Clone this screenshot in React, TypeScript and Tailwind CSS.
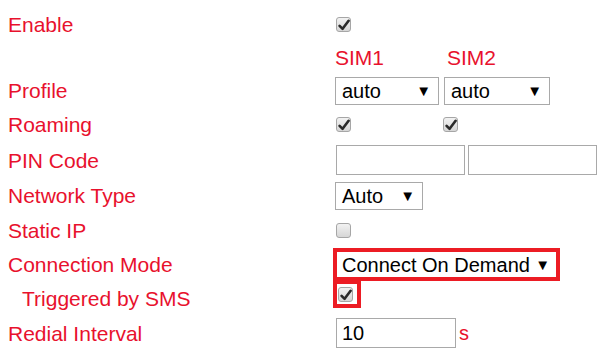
const RED = "text-[#e8112d]";

function Check({ checked = true }: { checked?: boolean }) {
  return (
    <span className="flex h-[15px] w-[15px] shrink-0 items-center justify-center rounded-[3px] border border-[#a6a6a6] bg-gradient-to-b from-[#f2f2f2] to-[#d6d6d6]">
      {checked && (
        <svg width="12" height="12" viewBox="0 0 12 12">
          <path d="M1.6 6.8 L4.6 9.8 L10.6 1.8" fill="none" stroke="#2a2a2a" strokeWidth="2.6" strokeLinecap="round" strokeLinejoin="round" />
        </svg>
      )}
    </span>
  );
}

function Arrow() {
  return <span className="text-[15px] leading-none">▼</span>;
}

function Select({ value, className }: { value: string; className: string }) {
  return (
    <div className={`flex items-center justify-between border border-[#a9a9a9] bg-white pl-[6px] pr-[7px] text-[20px] text-black ${className}`}>
      <span>{value}</span>
      <Arrow />
    </div>
  );
}

function Row({
  label,
  h,
  indent,
  children,
  align = "items-center",
}: {
  label?: string;
  h: string;
  indent?: boolean;
  children?: React.ReactNode;
  align?: string;
}) {
  return (
    <div className={`flex ${h}`}>
      <div className={`flex w-[335px] items-center text-[21px] ${indent ? "pl-[22px]" : "pl-[8px]"} ${RED}`}>{label}</div>
      <div className={`flex flex-1 ${align}`}>{children}</div>
    </div>
  );
}

export default function App() {
  return (
    <div
      className="h-[355px] w-[614px] overflow-hidden bg-white pt-[8px] text-[20px] leading-none"
      style={{ fontFamily: '"Liberation Sans", Arial, sans-serif' }}
    >
      <Row label="Enable" h="h-[33px]">
        <span className="ml-px">
          <Check />
        </span>
      </Row>
      <Row h="h-[33px]">
        <div className={`flex text-[21px] ${RED}`}>
          <span className="w-[112px]">SIM1</span>
          <span>SIM2</span>
        </div>
      </Row>
      <Row label="Profile" h="h-[33px]">
        <Select value="auto" className="h-[28px] w-[104px]" />
        <Select value="auto" className="ml-[5px] h-[28px] w-[106px]" />
      </Row>
      <Row label="Roaming" h="h-[35px]">
        <span className="ml-px w-[107px]">
          <Check />
        </span>
        <Check />
      </Row>
      <Row label="PIN Code" h="h-[36px]">
        <div className="ml-px h-[30px] w-[129px] border border-[#a9a9a9] bg-white" />
        <div className="ml-[3px] h-[30px] w-[129px] border border-[#a9a9a9] bg-white" />
      </Row>
      <Row label="Network Type" h="h-[35px]">
        <Select value="Auto" className="h-[28px] w-[88px]" />
      </Row>
      <Row label="Static IP" h="h-[34px]">
        <span className="ml-px">
          <Check checked={false} />
        </span>
      </Row>
      <Row label="Connection Mode" h="h-[34px]" align="items-start">
        <div className="-ml-[2px] mt-px border-4 border-[#ec1c24]">
          <div className="flex h-[25px] w-[219px] items-center justify-between bg-white pl-[5px] pr-[6px] text-black">
            <span>Connect On Demand</span>
            <Arrow />
          </div>
        </div>
      </Row>
      <Row label="Triggered by SMS" h="h-[34px]" indent align="items-start">
        <div className="-ml-[2px] -mt-[1px] h-[28px] w-[28px] overflow-hidden border-4 border-[#ec1c24]">
          <div className="ml-px mt-[3px]">
            <Check />
          </div>
        </div>
      </Row>
      <Row label="Redial Interval" h="h-[36px]">
        <div className="ml-px flex h-[30px] w-[120px] items-center border border-[#a9a9a9] bg-white pl-[5px] text-black">10</div>
        <span className={`ml-[3px] ${RED}`}>s</span>
      </Row>
    </div>
  );
}
